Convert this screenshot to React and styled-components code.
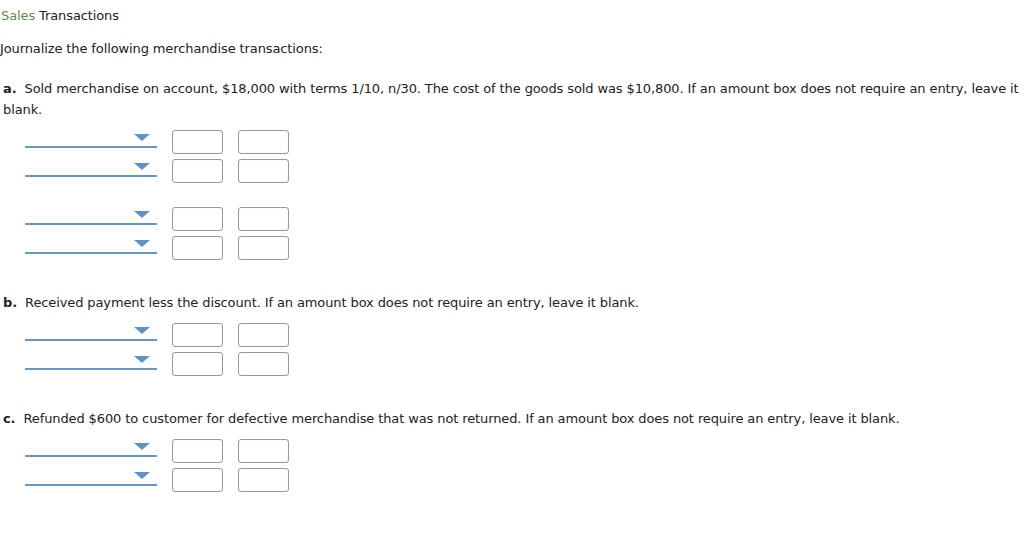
import styled, { createGlobalStyle } from "styled-components";

const GlobalStyle = createGlobalStyle`
body {
    margin: 0;
    background: #fff;
    font-family: "DejaVu Sans", Verdana, sans-serif;
    font-size: 13px;
    letter-spacing: -0.11px;
    color: #222;
}
`;

const entries = [
    {
        key: "a",
        text: "Sold merchandise on account, $18,000 with terms 1/10, n/30. The cost of the goods sold was $10,800. If an amount box does not require an entry, leave it blank.",
        groups: [2, 2],
    },
    {
        key: "b",
        text: "Received payment less the discount. If an amount box does not require an entry, leave it blank.",
        groups: [2],
    },
    {
        key: "c",
        text: "Refunded $600 to customer for defective merchandise that was not returned. If an amount box does not require an entry, leave it blank.",
        groups: [2],
    },
];

const App = () => {
    return (
        <>
            <GlobalStyle />
            <Page>
                <Title>
                    <Crumb>Sales</Crumb> Transactions
                </Title>
                <Intro>Journalize the following merchandise transactions:</Intro>
                {entries.map(entry => (
                    <Section key={entry.key}>
                        <Prompt>
                            <Letter>{entry.key}.</Letter>{entry.text}
                        </Prompt>
                        {entry.groups.map((rows, g) => (
                            <Group key={g}>
                                {Array.from({ length: rows }).map((_, r) => (
                                    <Row key={r}>
                                        <Select>
                                            <Arrow />
                                        </Select>
                                        <Amount />
                                        <Amount />
                                    </Row>
                                ))}
                            </Group>
                        ))}
                    </Section>
                ))}
            </Page>
        </>
    );
};

export default App;

const Page = styled.div`
padding: 7px 0 0 1px;
`;
const Title = styled.div`
line-height: 17px;
color: #222;
`;
const Crumb = styled.span`
color: #5b8f4c;
`;
const Intro = styled.div`
margin-top: 17px;
line-height: 16px;
margin-left: -1px;
`;
const Section = styled.div`
margin-top: 21px;
&+& {
    margin-top: 32px;
}
`;
const Prompt = styled.div`
padding-left: 2px;
line-height: 21px;
`;
const Letter = styled.b`
font-weight: bold;
margin-right: 8px;
`;
const Group = styled.div`
display: flex;
flex-direction: column;
gap: 5px;
margin-top: 10px;
&+& {
    margin-top: 24px;
}
`;
const Row = styled.div`
display: flex;
align-items: flex-start;
padding-left: 24px;
gap: 15px;
`;
const Select = styled.div`
width: 132px;
height: 16px;
border-bottom: 2px solid #6596c9;
position: relative;
`;
const Arrow = styled.span`
position: absolute;
right: 7px;
top: 4px;
width: 0;
height: 0;
border-left: 8px solid transparent;
border-right: 8px solid transparent;
border-top: 7px solid #5e93c8;
`;
const Amount = styled.div`
width: 49px;
height: 22px;
border: 1px solid #999;
border-radius: 3px;
box-shadow: inset 0 0 1px rgba(0,0,0,0.15);
background: #fff;
`;
